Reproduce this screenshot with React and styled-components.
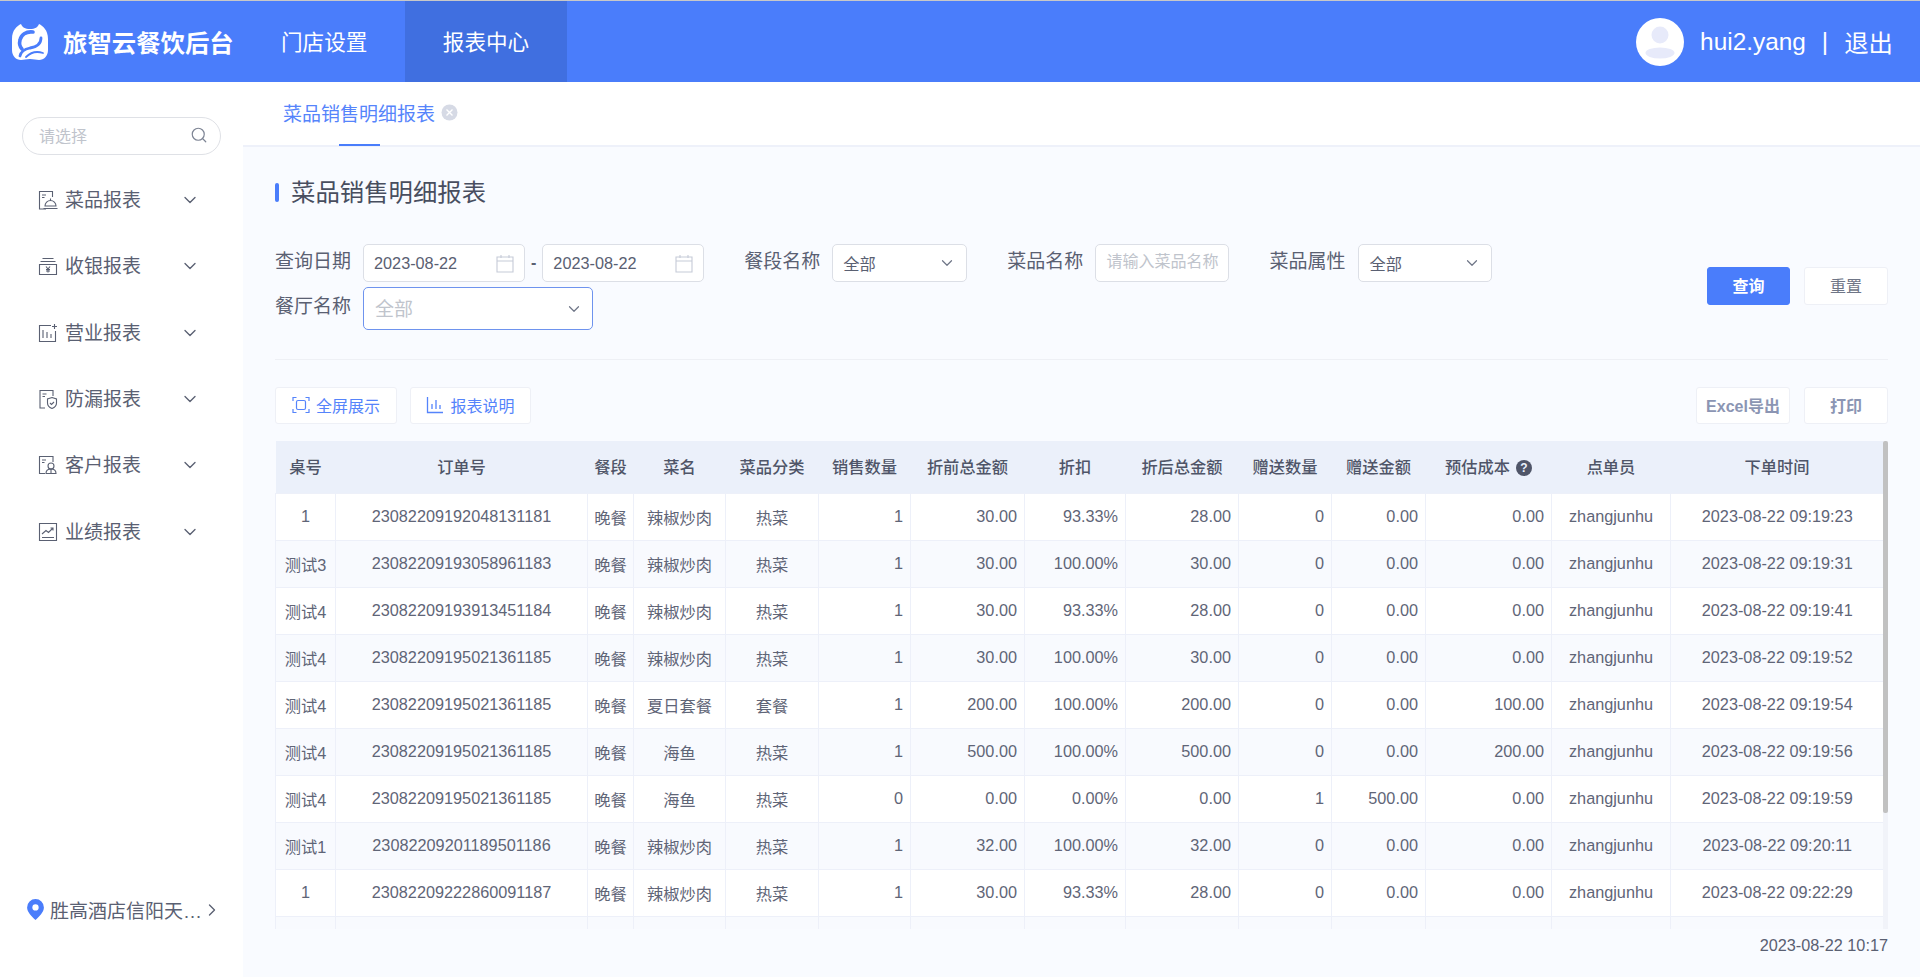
import React from "react";
import styled, { createGlobalStyle } from "styled-components";
import { ChevronDown, ChevronRight, Search } from "lucide-react";

const GlobalStyle = createGlobalStyle`
  html, body {
    margin: 0;
    padding: 0;
    height: 100%;
    overflow: hidden;
    font-family: "Liberation Sans", "Noto Sans CJK SC", sans-serif;
    color: #5a6072;
  }
  * { box-sizing: border-box; }
`;

const Page = styled.div`
  width: 1920px;
  height: 977px;
  display: flex;
  flex-direction: column;
  border-top: 1px solid #c8c8c8;
  background: #f9fbff;
`;

const Header = styled.header`
  height: 81px;
  flex: none;
  display: flex;
  align-items: stretch;
  background: #4a7dfb;
  color: #fff;
`;

const Brand = styled.div`
  display: flex;
  align-items: center;
  gap: 15px;
  padding-left: 12px;
  width: 281px;
  font-size: 24.4px;
  font-weight: 700;
  white-space: nowrap;
`;

const NavItem = styled.div`
  display: flex;
  align-items: center;
  justify-content: ${({ $active }) => ($active ? "center" : "flex-start")};
  font-size: 21.6px;
  white-space: nowrap;
  width: ${({ $active }) => ($active ? "162px" : "124px")};
  background: ${({ $active }) => ($active ? "#406fe0" : "transparent")};
  padding-bottom: 2px;
`;

const UserBox = styled.div`
  margin-left: auto;
  display: flex;
  align-items: center;
  padding-right: 27px;
  font-size: 24.4px;
  white-space: nowrap;
`;

const Avatar = styled.div`
  width: 48px;
  height: 48px;
  margin-right: 16px;
  border-radius: 50%;
  background: #fff;
  display: flex;
  align-items: center;
  justify-content: center;
`;

const Pipe = styled.span`
  margin: 0 16px;
`;

const Body = styled.div`
  flex: 1;
  display: flex;
  min-height: 0;
`;

const Sidebar = styled.aside`
  width: 243px;
  flex: none;
  background: #fff;
  display: flex;
  flex-direction: column;
  padding: 35px 0 0 22px;
`;

const SearchBox = styled.div`
  width: 199px;
  height: 38px;
  border: 1px solid #dfe1e6;
  border-radius: 19px;
  display: flex;
  align-items: center;
  justify-content: space-between;
  padding: 0 12px 2px 16px;
  font-size: 16px;
  color: #c0c4cc;
  margin-bottom: 12px;
`;

const Menu = styled.nav`
  display: flex;
  flex-direction: column;
`;

const MenuItem = styled.div`
  height: 66.3px;
  display: flex;
  align-items: center;
  padding-left: 16px;
  font-size: 19px;
  color: #5a6072;
  span {
    margin: 0 0 3px 7px;
    width: 115px;
  }
`;

const Location = styled.div`
  margin-top: auto;
  margin-bottom: 54px;
  display: flex;
  align-items: center;
  padding-left: 5px;
  font-size: 19px;
  span {
    margin: 0 0 0 6px;
  }
`;

const Main = styled.main`
  flex: 1;
  min-width: 0;
  display: flex;
  flex-direction: column;
`;

const TabBar = styled.div`
  height: 65px;
  flex: none;
  background: #fff;
  border-bottom: 2px solid #eef1fa;
  padding-left: 40px;
  display: flex;
`;

const Tab = styled.div`
  position: relative;
  display: flex;
  align-items: center;
  height: 63px;
  padding-bottom: 3px;
  gap: 6px;
  font-size: 19px;
  color: #5584fb;
  &::after {
    content: "";
    position: absolute;
    left: 56px;
    bottom: -1px;
    width: 41px;
    height: 2px;
    background: #4a7dfb;
  }
`;

const Content = styled.div`
  flex: 1;
  min-height: 0;
  display: flex;
  flex-direction: column;
  padding: 0 32px;
`;

const Title = styled.h1`
  margin: 26px 0 0;
  height: 34px;
  display: flex;
  align-items: center;
  gap: 12px;
  font-size: 24.4px;
  font-weight: 400;
  color: #484e5f;
  &::before {
    content: "";
    width: 4px;
    height: 19px;
    margin-top: 4px;
    border-radius: 2px;
    background: #4a7dfb;
  }
`;

const FilterArea = styled.div`
  margin-top: 37px;
  height: 116px;
  border-bottom: 1px solid #eef0f5;
  display: flex;
  justify-content: space-between;
`;

const FilterRows = styled.div`
  display: flex;
  flex-direction: column;
  gap: 5px;
`;

const FilterRow = styled.div`
  display: flex;
  align-items: flex-start;
  gap: 40px;
`;

const Field = styled.div`
  display: flex;
  align-items: center;
  gap: ${({ $gap }) => $gap || 12}px;
`;

const Label = styled.label`
  font-size: 19px;
  color: #5a6072;
  line-height: 30px;
  margin-bottom: 3px;
`;

const DateRange = styled.div`
  display: flex;
  align-items: center;
  gap: 6px;
  font-size: 16px;
  font-weight: 700;
`;

const BoxControl = styled.div`
  height: ${({ $tall }) => ($tall ? "43px" : "38px")};
  width: ${({ $w }) => $w}px;
  background: #fff;
  border: 1px solid ${({ $tall }) => ($tall ? "#6e93ee" : "#dcdfe6")};
  border-radius: 5px;
  display: flex;
  align-items: center;
  justify-content: space-between;
  padding: 0 ${({ $tall }) => ($tall ? "9px" : "10px")} 0 ${({ $tall }) => ($tall ? "11px" : "10px")};
  font-size: ${({ $tall }) => ($tall ? "19px" : "16.25px")};
  font-weight: 400;
  color: ${({ $tall }) => ($tall ? "#c0c4cc" : "#5a6072")};
  em {
    font-style: normal;
    margin-bottom: ${({ $tall }) => ($tall ? "3px" : "0")};
  }
`;

const TextInput = styled.input`
  width: 134px;
  height: 38px;
  border: 1px solid #dcdfe6;
  border-radius: 5px;
  background: #fff;
  padding: 0 9px 2px 10px;
  font: inherit;
  font-size: 16px;
  outline: none;
  &::placeholder {
    color: #c0c4cc;
  }
`;

const FilterButtons = styled.div`
  display: flex;
  gap: 14px;
  margin-top: 23px;
`;

const Button = styled.button`
  height: ${({ $low }) => ($low ? "37px" : "38px")};
  width: ${({ $w }) => $w || 84}px;
  display: inline-flex;
  align-items: center;
  justify-content: center;
  gap: 6px;
  padding: 0 0 2px;
  font-family: inherit;
  font-size: 16px;
  border-radius: 3px;
  border: 1px solid ${({ $primary }) => ($primary ? "#4a7dfb" : "#eef0f6")};
  background: ${({ $primary }) => ($primary ? "#4a7dfb" : "#fff")};
  color: ${({ $primary, $link, $muted }) =>
    $primary ? "#fff" : $link ? "#5584fb" : $muted ? "#8b95b3" : "#6f7687"};
  font-weight: ${({ $primary, $muted }) => ($primary || $muted ? 700 : 400)};
`;

const Toolbar = styled.div`
  margin-top: 27px;
  height: 37px;
  flex: none;
  display: flex;
  justify-content: space-between;
`;

const ToolGroup = styled.div`
  display: flex;
  gap: ${({ $gap }) => $gap}px;
`;

const TableWrap = styled.div`
  margin-top: 17px;
  height: 488px;
  flex: none;
  display: flex;
  overflow: hidden;
`;

const TableClip = styled.div`
  width: 1608px;
  flex: none;
  overflow: hidden;
`;

const Table = styled.table`
  width: 1608px;
  table-layout: fixed;
  border-collapse: collapse;
  font-size: 16.25px;
  color: #5f6577;
`;

const Th = styled.th`
  height: 52px;
  padding: 0 0 2px;
  background: #ebf0fa;
  color: #4f5568;
  font-weight: 500;
  text-align: center;
  white-space: nowrap;
`;

const HelpIcon = styled.span`
  display: inline-flex;
  align-items: center;
  justify-content: center;
  width: 16px;
  height: 16px;
  margin-left: 6px;
  border-radius: 50%;
  background: #4f5568;
  color: #ebf0fa;
  font-size: 12px;
  font-weight: 700;
  vertical-align: 1px;
`;

const Tr = styled.tr`
  background: ${({ $alt }) => ($alt ? "#f8fafe" : "#fff")};
`;

const Td = styled.td`
  height: 47px;
  padding: ${({ $right }) => ($right ? "0 7px 0 0" : "0")};
  border: 1px solid #edf0f9;
  text-align: ${({ $right }) => ($right ? "right" : "center")};
  white-space: nowrap;
  &:last-child {
    border-right: none;
  }
`;

const ScrollTrack = styled.div`
  width: 5px;
  flex: none;
  background: #f1f3f9;
`;

const ScrollThumb = styled.div`
  height: 372px;
  background: #c1c1c1;
  border-radius: 2px;
`;

const UpdatedAt = styled.div`
  text-align: right;
  font-size: 16.25px;
  line-height: 32px;
  color: #5a6072;
`;

const Logo = () => (
  <svg width="36" height="36" viewBox="0 0 36 36" aria-hidden="true">
    <path
      d="M9 0C5 2 0 6 0 15v11c0 6 4 10 9 10 3 0 5-1 9-1s6 1 9 1c5 0 9-4 9-10V15C36 6 31 2 27 0c-1 3-4 5-9 5S10 3 9 0Z"
      fill="#fff"
    />
    <path
      d="M21 8C14 7 9 11 8 16c-1 4 0 7 2 9"
      fill="none"
      stroke="#4a7dfb"
      strokeWidth="3.6"
      strokeLinecap="round"
    />
    <path
      d="M29 14c0 6-5 9-11 10-5 1-9 3-10 8"
      fill="none"
      stroke="#4a7dfb"
      strokeWidth="2.8"
      strokeLinecap="round"
    />
    <path d="M31 29c-6-2-12-1-17 4" fill="none" stroke="#4a7dfb" strokeWidth="1.8" strokeLinecap="round" />
  </svg>
);

const AvatarIcon = () => (
  <svg width="48" height="48" viewBox="0 0 48 48" aria-hidden="true">
    <circle cx="24" cy="17" r="8.5" fill="#e7eafa" />
    <ellipse cx="24" cy="35" rx="14.5" ry="5.5" fill="#e7eafa" />
  </svg>
);

const MenuIcon = ({ children }) => (
  <svg width="20" height="20" viewBox="0 0 20 20" fill="none" stroke="#5a6072" strokeWidth="1.1" aria-hidden="true">
    {children}
  </svg>
);

const icons = {
  dish: (
    <MenuIcon>
      <path d="M8 19H1.5V1.5h13V7" />
      <path d="M4 5h4M4 7.5h2.5" />
      <path d="M7 16a5.5 5.5 0 0 1 11 0ZM5.5 18.5h14M12.5 8.5v2" />
    </MenuIcon>
  ),
  cash: (
    <MenuIcon>
      <path d="M4.5 2.5h11M2.5 5.5h15" />
      <path d="M1.5 8.5h17v10h-17Z" />
      <path d="M8 10.5l2 2.5 2-2.5M10 13v3.5M8 13.5h4M8 15h4" />
    </MenuIcon>
  ),
  sales: (
    <MenuIcon>
      <path d="M13 2.5H1.5v16h16V8" />
      <path d="M5 7v8M9 9v6M13 11v4M16.5 1v5M14 3.5h5" />
    </MenuIcon>
  ),
  guard: (
    <MenuIcon>
      <path d="M7 19H2V1.5h13V7" />
      <path d="M4.5 5h4M4.5 7.5h2.5" />
      <path d="M14 8.5l4.5 1.5v4c0 3-2 4.5-4.5 5.5-2.5-1-4.5-2.5-4.5-5.5v-4Z" />
      <path d="M12 14l1.5 1.5 2.5-2.5" />
    </MenuIcon>
  ),
  guest: (
    <MenuIcon>
      <path d="M7 18.5H1.5V1.5H15V7" />
      <path d="M4 5h4M4 7.5h2.5" />
      <circle cx="13" cy="11" r="3" />
      <path d="M8 18.5c0-3 2-4.5 5-4.5s5 1.5 5 4.5ZM13 14v4.5" />
    </MenuIcon>
  ),
  trend: (
    <MenuIcon>
      <path d="M1.5 1.5h17v17h-17Z" />
      <path d="M4 12l4-3.5 2.5 2L15 6M12.5 6H15v2.5M4 15.5h12" />
    </MenuIcon>
  ),
};

const CalendarIcon = () => (
  <svg width="18" height="19" viewBox="0 0 18 19" fill="none" stroke="#c6cbd8" strokeWidth="1.1" aria-hidden="true">
    <path d="M1 3h16v15H1ZM1 7h16M5 1v3M13 1v3" />
  </svg>
);

const CloseIcon = () => (
  <svg width="17" height="17" viewBox="0 0 17 17" aria-hidden="true">
    <circle cx="8.5" cy="8.5" r="8" fill="#d6dae5" />
    <path d="M5.5 5.5l6 6M11.5 5.5l-6 6" stroke="#fff" strokeWidth="1.4" />
  </svg>
);

const PinIcon = () => (
  <svg width="17" height="21" viewBox="0 0 16 20" aria-hidden="true">
    <path d="M8 0a8 8 0 0 1 8 8c0 4.5-4.5 8.5-8 12-3.5-3.5-8-7.5-8-12a8 8 0 0 1 8-8Z" fill="#4a7dfb" />
    <circle cx="8" cy="8" r="3" fill="#fff" />
  </svg>
);

const FullscreenIcon = () => (
  <svg width="18" height="18" viewBox="0 0 18 18" fill="none" stroke="#5584fb" strokeWidth="1.2" aria-hidden="true">
    <path d="M1 5V1.5h3.5M13.5 1.5H17V5M17 13v3.5h-3.5M4.5 16.5H1V13" />
    <rect x="4.5" y="4.5" width="9" height="9" rx="1.5" />
  </svg>
);

const BarsIcon = () => (
  <svg width="18" height="18" viewBox="0 0 18 18" fill="none" stroke="#5584fb" strokeWidth="1.3" aria-hidden="true">
    <path d="M1.5 1v15.5H17M6 13V8M10 13V4M14 13V9" />
  </svg>
);

const menus = [
  ["dish", "菜品报表"],
  ["cash", "收银报表"],
  ["sales", "营业报表"],
  ["guard", "防漏报表"],
  ["guest", "客户报表"],
  ["trend", "业绩报表"],
];

const colWidths = [60, 252, 46, 92, 93, 92, 114, 101, 113, 93, 94, 126, 119, 213];

const heads = ["桌号", "订单号", "餐段", "菜名", "菜品分类", "销售数量", "折前总金额", "折扣", "折后总金额", "赠送数量", "赠送金额", "预估成本", "点单员", "下单时间"];

const rightCols = [5, 6, 7, 8, 9, 10, 11];

const rows = [
  ["1", "23082209192048131181", "晚餐", "辣椒炒肉", "热菜", "1", "30.00", "93.33%", "28.00", "0", "0.00", "0.00", "zhangjunhu", "2023-08-22 09:19:23"],
  ["测试3", "23082209193058961183", "晚餐", "辣椒炒肉", "热菜", "1", "30.00", "100.00%", "30.00", "0", "0.00", "0.00", "zhangjunhu", "2023-08-22 09:19:31"],
  ["测试4", "23082209193913451184", "晚餐", "辣椒炒肉", "热菜", "1", "30.00", "93.33%", "28.00", "0", "0.00", "0.00", "zhangjunhu", "2023-08-22 09:19:41"],
  ["测试4", "23082209195021361185", "晚餐", "辣椒炒肉", "热菜", "1", "30.00", "100.00%", "30.00", "0", "0.00", "0.00", "zhangjunhu", "2023-08-22 09:19:52"],
  ["测试4", "23082209195021361185", "晚餐", "夏日套餐", "套餐", "1", "200.00", "100.00%", "200.00", "0", "0.00", "100.00", "zhangjunhu", "2023-08-22 09:19:54"],
  ["测试4", "23082209195021361185", "晚餐", "海鱼", "热菜", "1", "500.00", "100.00%", "500.00", "0", "0.00", "200.00", "zhangjunhu", "2023-08-22 09:19:56"],
  ["测试4", "23082209195021361185", "晚餐", "海鱼", "热菜", "0", "0.00", "0.00%", "0.00", "1", "500.00", "0.00", "zhangjunhu", "2023-08-22 09:19:59"],
  ["测试1", "23082209201189501186", "晚餐", "辣椒炒肉", "热菜", "1", "32.00", "100.00%", "32.00", "0", "0.00", "0.00", "zhangjunhu", "2023-08-22 09:20:11"],
  ["1", "23082209222860091187", "晚餐", "辣椒炒肉", "热菜", "1", "30.00", "93.33%", "28.00", "0", "0.00", "0.00", "zhangjunhu", "2023-08-22 09:22:29"],
  ["", "", "", "", "", "", "", "", "", "", "", "", "", ""],
];

const SelectArrow = () => <ChevronDown size={18} color="#6f7687" strokeWidth={1.6} />;

const App = () => (
  <>
    <GlobalStyle />
    <Page>
      <Header>
        <Brand>
          <Logo />
          旅智云餐饮后台
        </Brand>
        <NavItem>门店设置</NavItem>
        <NavItem $active>报表中心</NavItem>
        <UserBox>
          <Avatar>
            <AvatarIcon />
          </Avatar>
          hui2.yang
          <Pipe>|</Pipe>
          退出
        </UserBox>
      </Header>
      <Body>
        <Sidebar>
          <SearchBox>
            请选择
            <Search size={18} color="#7d8494" strokeWidth={1.6} />
          </SearchBox>
          <Menu>
            {menus.map(([icon, text]) => (
              <MenuItem key={text}>
                {icons[icon]}
                <span>{text}</span>
                <ChevronDown size={20} color="#5a6072" strokeWidth={1.6} />
              </MenuItem>
            ))}
          </Menu>
          <Location>
            <PinIcon />
            <span>胜高酒店信阳天…</span>
            <ChevronRight size={20} color="#5a6072" strokeWidth={1.6} />
          </Location>
        </Sidebar>
        <Main>
          <TabBar>
            <Tab>
              菜品销售明细报表
              <CloseIcon />
            </Tab>
          </TabBar>
          <Content>
            <Title>菜品销售明细报表</Title>
            <FilterArea>
              <FilterRows>
                <FilterRow>
                  <Field>
                    <Label>查询日期</Label>
                    <DateRange>
                      <BoxControl $w={162}>
                        2023-08-22
                        <CalendarIcon />
                      </BoxControl>
                      -
                      <BoxControl $w={162}>
                        2023-08-22
                        <CalendarIcon />
                      </BoxControl>
                    </DateRange>
                  </Field>
                  <Field>
                    <Label>餐段名称</Label>
                    <BoxControl $w={135}>
                      全部
                      <SelectArrow />
                    </BoxControl>
                  </Field>
                  <Field>
                    <Label>菜品名称</Label>
                    <TextInput placeholder="请输入菜品名称" />
                  </Field>
                  <Field $gap={13}>
                    <Label>菜品属性</Label>
                    <BoxControl $w={134}>
                      全部
                      <SelectArrow />
                    </BoxControl>
                  </Field>
                </FilterRow>
                <FilterRow>
                  <Field>
                    <Label>餐厅名称</Label>
                    <BoxControl $w={230} $tall>
                      <em>全部</em>
                      <SelectArrow />
                    </BoxControl>
                  </Field>
                </FilterRow>
              </FilterRows>
              <FilterButtons>
                <Button $primary $w={83}>查询</Button>
                <Button>重置</Button>
              </FilterButtons>
            </FilterArea>
            <Toolbar>
              <ToolGroup $gap={13}>
                <Button $low $link $w={122}>
                  <FullscreenIcon />
                  全屏展示
                </Button>
                <Button $low $link $w={121}>
                  <BarsIcon />
                  报表说明
                </Button>
              </ToolGroup>
              <ToolGroup $gap={14}>
                <Button $low $muted $w={94}>Excel导出</Button>
                <Button $low $muted>打印</Button>
              </ToolGroup>
            </Toolbar>
            <TableWrap>
              <TableClip>
                <Table>
                  <colgroup>
                    {colWidths.map((w, i) => (
                      <col key={i} style={{ width: w }} />
                    ))}
                  </colgroup>
                  <thead>
                    <tr>
                      {heads.map((h) => (
                        <Th key={h}>
                          {h}
                          {h === "预估成本" && <HelpIcon>?</HelpIcon>}
                        </Th>
                      ))}
                    </tr>
                  </thead>
                  <tbody>
                    {rows.map((row, r) => (
                      <Tr key={r} $alt={r % 2 === 1}>
                        {row.map((cell, c) => (
                          <Td key={c} $right={rightCols.includes(c)}>
                            {cell}
                          </Td>
                        ))}
                      </Tr>
                    ))}
                  </tbody>
                </Table>
              </TableClip>
              <ScrollTrack>
                <ScrollThumb />
              </ScrollTrack>
            </TableWrap>
            <UpdatedAt>2023-08-22 10:17</UpdatedAt>
          </Content>
        </Main>
      </Body>
    </Page>
  </>
);

export default App;
